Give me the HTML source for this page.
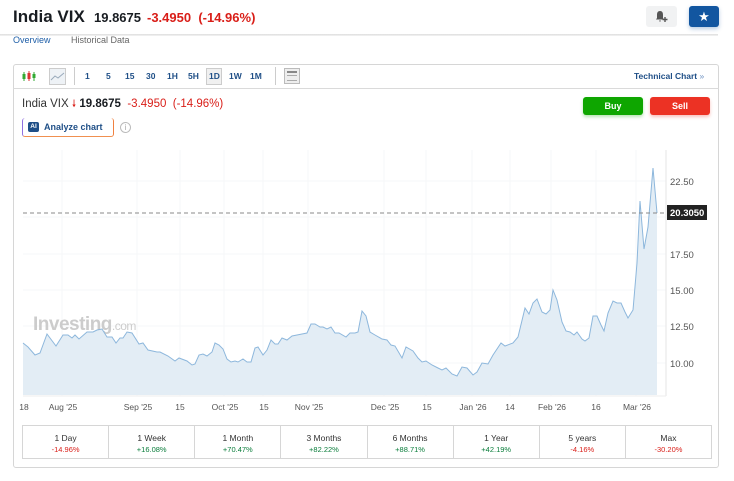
<!DOCTYPE html>
<html><head><meta charset="utf-8"><style>
*{box-sizing:border-box;margin:0;padding:0}
body{width:734px;height:481px;background:#fff;font-family:"Liberation Sans",Arial,sans-serif;position:relative;overflow:hidden;color:#222}
.a{position:absolute;white-space:nowrap}
</style></head><body>
<div class="a" style="left:13px;top:7px;font-size:17px;font-weight:bold;color:#181c21">India VIX</div>
<div class="a" style="left:94px;top:10px;font-size:13px;font-weight:bold;color:#181c21">19.8675</div>
<div class="a" style="left:147px;top:10px;font-size:13px;font-weight:bold;color:#d91e18">-3.4950 &nbsp;(-14.96%)</div>
<div class="a" style="left:646px;top:6px;width:31px;height:21px;background:#f1f2f3;border-radius:3px"></div>
<svg class="a" style="left:655px;top:10px" width="14" height="13" viewBox="0 0 14 13"><path d="M5 1 C2.5 1 2 3 2 5 L2 8 L1 9.5 L9 9.5 L8 8 L8 5 C8 3 7.5 1 5 1Z M4 10.5 L6 10.5 L5 12Z" fill="#555"/><path d="M10 7 V12 M7.5 9.5 H12.5" stroke="#555" stroke-width="1.4"/></svg>
<div class="a" style="left:689px;top:6px;width:30px;height:21px;background:#1256a0;border-radius:3px;box-shadow:0 2px 4px rgba(18,86,160,.3);color:#fff;font-size:13px;text-align:center;line-height:21px">★</div>
<div class="a" style="left:0;top:34px;width:718px;height:2px;background:linear-gradient(#ddd,#f4f4f4)"></div>
<div class="a" style="left:13px;top:35px;font-size:9px;color:#1f5fa8">Overview</div>
<div class="a" style="left:71px;top:35px;font-size:9px;color:#666">Historical Data</div>

<div class="a" style="left:13px;top:64px;width:706px;height:404px;border:1px solid #d6d6d6;border-radius:3px"></div>
<div class="a" style="left:13px;top:88px;width:706px;height:1px;background:#dadada"></div>
<svg class="a" style="left:21px;top:69px" width="16" height="14"><g stroke="#3a3" stroke-width="1"><line x1="3" y1="3" x2="3" y2="12"/><line x1="13" y1="3" x2="13" y2="12"/></g><rect x="1.5" y="5" width="3" height="5" fill="#3a3"/><line x1="8" y1="2" x2="8" y2="12" stroke="#d33"/><rect x="6.5" y="4" width="3" height="6" fill="#d33"/><rect x="11.5" y="5" width="3" height="4" fill="#3a3"/></svg>
<div class="a" style="left:49px;top:68px;width:17px;height:17px;border:1px solid #ccc;background:#eef2f6"></div>
<svg class="a" style="left:50px;top:69px" width="15" height="15"><path d="M1 11 L5 7 L8 9 L14 4" stroke="#9ab" fill="none"/></svg>
<div class="a" style="left:74px;top:67px;width:1px;height:18px;background:#ccc"></div>
<div class="a" style="left:0;top:71px;font-size:8.5px;font-weight:bold;color:#1f4f87">
<span class="a" style="left:85px">1</span><span class="a" style="left:106px">5</span><span class="a" style="left:125px">15</span><span class="a" style="left:146px">30</span><span class="a" style="left:167px">1H</span><span class="a" style="left:188px">5H</span><span class="a" style="left:229px">1W</span><span class="a" style="left:250px">1M</span></div>
<div class="a" style="left:206px;top:68px;width:16px;height:17px;border:1px solid #ccc;background:#f0f0f0"></div>
<div class="a" style="left:209px;top:71px;font-size:8.5px;font-weight:bold;color:#1f4f87">1D</div>
<div class="a" style="left:275px;top:67px;width:1px;height:18px;background:#ccc"></div>
<div class="a" style="left:284px;top:68px;width:16px;height:16px;border:1px solid #bbb;background:#eee"></div>
<div class="a" style="left:287px;top:71px;width:10px;height:2px;background:#888"></div>
<div class="a" style="left:287px;top:75px;width:10px;height:6px;border-top:1px solid #aaa;border-bottom:1px solid #aaa"></div>
<div class="a" style="left:634px;top:71px;font-size:8.5px;font-weight:bold;color:#1f4f87">Technical Chart <span style="color:#6b8fc0;font-weight:normal">»</span></div>

<div class="a" style="left:22px;top:97px;font-size:11.5px;color:#333">India VIX <span style="color:#d91e18;font-size:10px">🠗</span> <b style="color:#181c21">19.8675</b> <span style="color:#d91e18">&nbsp;-3.4950 &nbsp;(-14.96%)</span></div>
<div class="a" style="left:583px;top:97px;width:60px;height:18px;background:#0ea600;border-radius:3px;color:#fff;font-size:9px;font-weight:bold;text-align:center;line-height:18px;box-shadow:0 2px 3px rgba(14,166,0,.3)">Buy</div>
<div class="a" style="left:650px;top:97px;width:60px;height:18px;background:#ec3224;border-radius:3px;color:#fff;font-size:9px;font-weight:bold;text-align:center;line-height:18px;box-shadow:0 2px 3px rgba(236,50,36,.3)">Sell</div>
<div class="a" style="left:22px;top:118px;width:92px;height:19px;border:1px solid;border-color:#c7a0e8 #f08040 #f09050 #9070e0;border-radius:3px;border-top:none"></div>
<div class="a" style="left:28px;top:122px;width:11px;height:10px;background:#1f4f87;border-radius:2px;color:#fff;font-size:6.5px;font-weight:bold;text-align:center;line-height:10px">AI</div>
<div class="a" style="left:44px;top:122px;font-size:9px;font-weight:bold;color:#1f4f87">Analyze chart</div>
<div class="a" style="left:120px;top:122px;width:11px;height:11px;border:1px solid #bbb;border-radius:50%;font-size:8px;color:#aaa;text-align:center;line-height:10px">i</div>

<svg class="a" style="left:0;top:0" width="734" height="420">
<g stroke="#f6f7f8" stroke-width="1">
<line x1="23" y1="181" x2="666" y2="181"/><line x1="23" y1="217" x2="666" y2="217"/><line x1="23" y1="254" x2="666" y2="254"/><line x1="23" y1="290" x2="666" y2="290"/><line x1="23" y1="326" x2="666" y2="326"/><line x1="23" y1="363" x2="666" y2="363"/>
<line x1="62" y1="150" x2="62" y2="396"/><line x1="137" y1="150" x2="137" y2="396"/><line x1="180" y1="150" x2="180" y2="396"/><line x1="224" y1="150" x2="224" y2="396"/><line x1="263" y1="150" x2="263" y2="396"/><line x1="308" y1="150" x2="308" y2="396"/><line x1="384" y1="150" x2="384" y2="396"/><line x1="426" y1="150" x2="426" y2="396"/><line x1="472" y1="150" x2="472" y2="396"/><line x1="510" y1="150" x2="510" y2="396"/><line x1="551" y1="150" x2="551" y2="396"/><line x1="596" y1="150" x2="596" y2="396"/><line x1="636" y1="150" x2="636" y2="396"/>
</g>
<line x1="666" y1="150" x2="666" y2="396" stroke="#e6e6e6"/>
<line x1="23" y1="396" x2="666" y2="396" stroke="#eeeeee"/>
<text x="33" y="330" font-family="Liberation Sans" font-weight="bold" font-size="19" fill="#ccc" letter-spacing="-0.5">Investing<tspan font-weight="normal" font-size="12">.com</tspan></text>
<path d="M23 343 L28 347 L35 355 L40 353 L47 334 L56 346 L63 335 L68 335 L72 338 L75 335 L79 339 L87 332 L93 332 L97 330 L102 329 L107 337 L112 337 L116 343 L120 338 L123 338 L127 332 L132 333 L139 344 L143 343 L148 350 L157 352 L160 352 L168 356 L175 361 L179 358 L187 361 L192 365 L195 364 L199 355 L203 354 L207 356 L212 352 L215 343 L219 345 L223 349 L227 359 L231 362 L235 361 L238 362 L243 359 L247 362 L251 362 L255 348 L258 347 L263 355 L267 350 L271 340 L275 344 L278 344 L282 338 L287 340 L292 336 L297 335 L302 334 L307 333 L311 324 L315 324 L320 327 L323 327 L327 329 L331 327 L335 333 L339 333 L346 337 L350 333 L355 333 L358 332 L362 311 L366 316 L370 332 L375 335 L382 339 L387 340 L391 345 L395 346 L402 358 L406 347 L413 351 L418 358 L422 362 L426 361 L432 365 L438 368 L442 370 L446 368 L452 374 L457 376 L462 367 L467 368 L473 375 L477 372 L482 363 L488 364 L493 355 L501 343 L505 346 L513 343 L518 337 L525 308 L529 314 L533 303 L537 299 L542 312 L546 314 L550 310 L553 290 L557 300 L562 322 L566 331 L570 332 L574 335 L577 332 L582 339 L585 341 L589 338 L593 316 L597 316 L601 325 L604 331 L608 313 L613 301 L617 303 L621 303 L625 312 L628 318 L633 310 L637 263 L640 201 L644 249 L648 227 L653 168 L657 213 L657 395 L23 395Z" fill="#e3edf5"/>
<path d="M23 343 L28 347 L35 355 L40 353 L47 334 L56 346 L63 335 L68 335 L72 338 L75 335 L79 339 L87 332 L93 332 L97 330 L102 329 L107 337 L112 337 L116 343 L120 338 L123 338 L127 332 L132 333 L139 344 L143 343 L148 350 L157 352 L160 352 L168 356 L175 361 L179 358 L187 361 L192 365 L195 364 L199 355 L203 354 L207 356 L212 352 L215 343 L219 345 L223 349 L227 359 L231 362 L235 361 L238 362 L243 359 L247 362 L251 362 L255 348 L258 347 L263 355 L267 350 L271 340 L275 344 L278 344 L282 338 L287 340 L292 336 L297 335 L302 334 L307 333 L311 324 L315 324 L320 327 L323 327 L327 329 L331 327 L335 333 L339 333 L346 337 L350 333 L355 333 L358 332 L362 311 L366 316 L370 332 L375 335 L382 339 L387 340 L391 345 L395 346 L402 358 L406 347 L413 351 L418 358 L422 362 L426 361 L432 365 L438 368 L442 370 L446 368 L452 374 L457 376 L462 367 L467 368 L473 375 L477 372 L482 363 L488 364 L493 355 L501 343 L505 346 L513 343 L518 337 L525 308 L529 314 L533 303 L537 299 L542 312 L546 314 L550 310 L553 290 L557 300 L562 322 L566 331 L570 332 L574 335 L577 332 L582 339 L585 341 L589 338 L593 316 L597 316 L601 325 L604 331 L608 313 L613 301 L617 303 L621 303 L625 312 L628 318 L633 310 L637 263 L640 201 L644 249 L648 227 L653 168 L657 213" fill="none" stroke="#8db7dc" stroke-width="1"/>
<line x1="23" y1="213" x2="666" y2="213" stroke="#888" stroke-dasharray="4,3"/>
<rect x="667" y="205" width="40" height="15" fill="#222"/>
<text x="670" y="216" font-family="Liberation Sans" font-size="9.5" font-weight="bold" fill="#fff">20.3050</text>
<g font-family="Liberation Sans" font-size="9.5" fill="#555">
<text x="670" y="185">22.50</text><text x="670" y="258">17.50</text><text x="670" y="294">15.00</text><text x="670" y="330">12.50</text><text x="670" y="367">10.00</text>
</g>
<g font-family="Liberation Sans" font-size="8.5" fill="#555" text-anchor="middle">
<text x="24" y="410">18</text><text x="63" y="410">Aug '25</text><text x="138" y="410">Sep '25</text><text x="180" y="410">15</text><text x="225" y="410">Oct '25</text><text x="264" y="410">15</text><text x="309" y="410">Nov '25</text><text x="385" y="410">Dec '25</text><text x="427" y="410">15</text><text x="473" y="410">Jan '26</text><text x="510" y="410">14</text><text x="552" y="410">Feb '26</text><text x="596" y="410">16</text><text x="637" y="410">Mar '26</text>
</g>
</svg>

<div class="a" style="left:22px;top:425px;width:690px;height:34px;border:1px solid #d6d6d6;display:flex">
<div style="flex:1;border-right:1px solid #d6d6d6;text-align:center;font-size:8.5px;padding-top:7px;color:#333">1 Day<div style="font-size:7.5px;color:#d91e18;margin-top:2px">-14.96%</div></div>
<div style="flex:1;border-right:1px solid #d6d6d6;text-align:center;font-size:8.5px;padding-top:7px;color:#333">1 Week<div style="font-size:7.5px;color:#0a7d3b;margin-top:2px">+16.08%</div></div>
<div style="flex:1;border-right:1px solid #d6d6d6;text-align:center;font-size:8.5px;padding-top:7px;color:#333">1 Month<div style="font-size:7.5px;color:#0a7d3b;margin-top:2px">+70.47%</div></div>
<div style="flex:1;border-right:1px solid #d6d6d6;text-align:center;font-size:8.5px;padding-top:7px;color:#333">3 Months<div style="font-size:7.5px;color:#0a7d3b;margin-top:2px">+82.22%</div></div>
<div style="flex:1;border-right:1px solid #d6d6d6;text-align:center;font-size:8.5px;padding-top:7px;color:#333">6 Months<div style="font-size:7.5px;color:#0a7d3b;margin-top:2px">+88.71%</div></div>
<div style="flex:1;border-right:1px solid #d6d6d6;text-align:center;font-size:8.5px;padding-top:7px;color:#333">1 Year<div style="font-size:7.5px;color:#0a7d3b;margin-top:2px">+42.19%</div></div>
<div style="flex:1;border-right:1px solid #d6d6d6;text-align:center;font-size:8.5px;padding-top:7px;color:#333">5 years<div style="font-size:7.5px;color:#d91e18;margin-top:2px">-4.16%</div></div>
<div style="flex:1;text-align:center;font-size:8.5px;padding-top:7px;color:#333">Max<div style="font-size:7.5px;color:#d91e18;margin-top:2px">-30.20%</div></div>
</div>
</body></html>
